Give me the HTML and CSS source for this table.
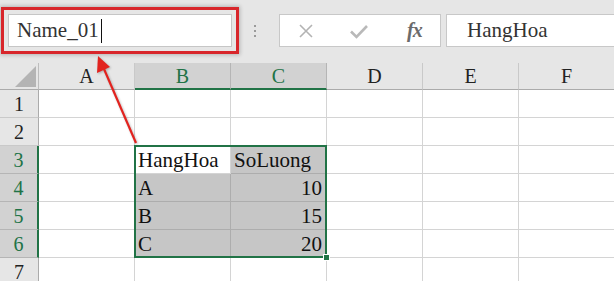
FILE: index.html
```html
<!DOCTYPE html>
<html lang="en">

<head>
    <meta charset="UTF-8">
    <meta name="viewport" content="width=device-width, initial-scale=1.0">
    <title>Name box</title>
    <link rel="stylesheet" href="styles.css">
</head>

<body>
    <div id="main">
        <div class="toolbar">
            <div class="name-box"><span>Name_01</span><span class="caret"></span></div>
            <div class="grip"><i></i><i></i><i></i></div>
            <div class="fx-buttons">
                <svg class="btn-cancel" width="16" height="16" viewBox="0 0 16 16">
                    <path d="M2 2 L14 14 M14 2 L2 14" stroke="#b3b3b3" stroke-width="1.6" fill="none" />
                </svg>
                <svg class="btn-enter" width="20" height="16" viewBox="0 0 20 16">
                    <path d="M2 7.5 L7.5 13 L18 2" stroke="#b9b9b9" stroke-width="2.6" fill="none" />
                </svg>
                <span class="fx">fx</span>
            </div>
            <div class="formula">HangHoa</div>
        </div>

        <div class="sheet">
            <!-- header row -->
            <div class="corner"><span class="tri"></span></div>
            <div class="col-head">A</div>
            <div class="col-head sel">B</div>
            <div class="col-head sel">C</div>
            <div class="col-head">D</div>
            <div class="col-head">E</div>
            <div class="col-head">F</div>

            <div class="row-head">1</div>
            <div class="cell"></div><div class="cell"></div><div class="cell"></div>
            <div class="cell"></div><div class="cell"></div><div class="cell"></div>

            <div class="row-head">2</div>
            <div class="cell"></div><div class="cell"></div><div class="cell"></div>
            <div class="cell"></div><div class="cell"></div><div class="cell"></div>

            <div class="row-head sel">3</div>
            <div class="cell"></div>
            <div class="cell active">HangHoa</div>
            <div class="cell fill">SoLuong</div>
            <div class="cell"></div><div class="cell"></div><div class="cell"></div>

            <div class="row-head sel">4</div>
            <div class="cell"></div>
            <div class="cell fill">A</div>
            <div class="cell fill num">10</div>
            <div class="cell"></div><div class="cell"></div><div class="cell"></div>

            <div class="row-head sel">5</div>
            <div class="cell"></div>
            <div class="cell fill">B</div>
            <div class="cell fill num">15</div>
            <div class="cell"></div><div class="cell"></div><div class="cell"></div>

            <div class="row-head sel">6</div>
            <div class="cell"></div>
            <div class="cell fill">C</div>
            <div class="cell fill num">20</div>
            <div class="cell"></div><div class="cell"></div><div class="cell"></div>

            <div class="row-head">7</div>
            <div class="cell"></div><div class="cell"></div><div class="cell"></div>
            <div class="cell"></div><div class="cell"></div><div class="cell"></div>

            <!-- range B3:C6 -->
            <div class="selection"><span class="handle"></span></div>
        </div>

        <svg class="arrow" width="614" height="281" viewBox="0 0 614 281">
            <line x1="136" y1="143" x2="104" y2="69" stroke="#e2231f" stroke-width="2.2" />
            <polygon points="98,56 110,67 97,73" fill="#e2231f" />
        </svg>
    </div>
</body>

</html>
```

FILE: styles.css
```css
* {
    margin: 0;
    padding: 0;
    box-sizing: border-box;
}

body {
    background: #fff;
    font-family: "Times New Roman", "Liberation Serif", Tinos, "Noto Serif", "DejaVu Serif", serif;
    color: #222;
}

#main {
    position: relative;
    width: 614px;
    height: 281px;
    overflow: hidden;
}

/* formula bar */
.toolbar {
    height: 63px;
    background: #e6e6e6;
    display: flex;
    align-items: flex-start;
    padding-top: 14px;
    padding-left: 8px;
}

.name-box {
    width: 224px;
    height: 33px;
    background: #fff;
    border: 1px solid #c6c6c6;
    display: flex;
    align-items: center;
    padding-left: 8px;
    font-size: 21px;
    color: #333;
    box-shadow: 0 0 0 4px #e6e6e6, 0 0 0 7px #d8262b, 0 0 4px 8px rgba(0, 0, 0, 0.22);
}

.caret {
    width: 1px;
    height: 24px;
    background: #111;
    margin-left: 2px;
}

.grip {
    margin-left: 22px;
    margin-top: 11px;
    display: flex;
    flex-direction: column;
    gap: 3px;
}

.grip i {
    width: 2px;
    height: 2px;
    background: #9a9a9a;
}

.fx-buttons {
    margin-left: 23px;
    width: 162px;
    height: 33px;
    background: #fff;
    border: 1px solid #c8c8c8;
    display: flex;
    align-items: center;
}

.btn-cancel {
    margin-left: 18px;
}

.btn-enter {
    margin-left: 35px;
    margin-top: 2px;
}

.fx {
    margin-left: 38px;
    font-style: italic;
    font-weight: bold;
    font-size: 20px;
    color: #6b6b6b;
    letter-spacing: -1px;
}

.formula {
    flex: 1;
    margin-left: 5px;
    height: 33px;
    background: #fff;
    border: 1px solid #c8c8c8;
    border-right: none;
    padding-left: 20px;
    font-size: 21px;
    line-height: 31px;
    color: #333;
}

/* grid */
.sheet {
    position: relative;
    display: grid;
    grid-template-columns: 39px repeat(6, 96px);
    grid-template-rows: 27px repeat(7, 28px);
    font-size: 21px;
}

.corner {
    background: #e6e6e6;
    border-right: 1px solid #bdbdbd;
    border-bottom: 1px solid #ababab;
    display: flex;
    justify-content: flex-end;
    align-items: flex-end;
    padding: 0 2px 2px 0;
}

.tri {
    width: 21px;
    height: 21px;
    background: #b4b4b4;
    clip-path: polygon(100% 0, 100% 100%, 0 100%);
}

.col-head {
    background: #e6e6e6;
    border-right: 1px solid #c9c9c9;
    border-bottom: 1px solid #ababab;
    text-align: center;
    font-size: 20px;
    line-height: 26px;
    color: #222;
}

.col-head.sel {
    background: #d2d2d2;
    color: #217346;
    border-bottom: 2px solid #217346;
    border-right-color: #b5b5b5;
}

.row-head {
    background: #e6e6e6;
    border-right: 1px solid #ababab;
    border-bottom: 1px solid #c9c9c9;
    text-align: center;
    font-size: 20px;
    line-height: 28px;
    color: #222;
}

.row-head.sel {
    background: #d2d2d2;
    color: #217346;
    border-right: 2px solid #217346;
    border-bottom-color: #b5b5b5;
}

.cell {
    border-right: 1px solid #d4d4d4;
    border-bottom: 1px solid #d4d4d4;
    padding-left: 3px;
    line-height: 28px;
    color: #111;
    white-space: nowrap;
}

.cell.fill {
    background: #c6c6c6;
    border-color: #adadad;
}

.cell.active {
    background: #fff;
}

.cell.num {
    text-align: right;
    padding-right: 4px;
}

/* range outline sits on the grid area, out of auto placement */
.selection {
    position: absolute;
    grid-column: 3 / 5;
    grid-row: 4 / 8;
    top: -1px;
    left: -1px;
    right: 0;
    bottom: 0;
    border: 2px solid #217346;
    pointer-events: none;
}

.handle {
    position: absolute;
    right: -5px;
    bottom: -5px;
    width: 7px;
    height: 7px;
    background: #217346;
    border: 1px solid #fff;
}

/* callout arrow */
.arrow {
    position: absolute;
    top: 0;
    left: 0;
    pointer-events: none;
    filter: drop-shadow(1px 1px 1px rgba(0, 0, 0, 0.25));
}
```
